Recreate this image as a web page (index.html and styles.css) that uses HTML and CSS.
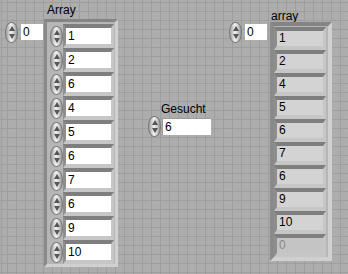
FILE: index.html
```html
<!DOCTYPE html>
<html lang="de">
<head>
  <meta charset="UTF-8" />
  <title>Array suchen</title>
  <link rel="stylesheet" href="styles.css">
</head>
<body>
  <div class="panel">
    <!-- Eingabe-Array -->
    <div class="label label-array">Array</div>
    <div class="index index-left">
      <div class="spin"></div>
      <div class="index-box">0</div>
    </div>
    <div class="array array-in">
      <div class="row"><div class="spin"></div><div class="num">1</div></div>
      <div class="row"><div class="spin"></div><div class="num">2</div></div>
      <div class="row"><div class="spin"></div><div class="num">6</div></div>
      <div class="row"><div class="spin"></div><div class="num">4</div></div>
      <div class="row"><div class="spin"></div><div class="num">5</div></div>
      <div class="row"><div class="spin"></div><div class="num">6</div></div>
      <div class="row"><div class="spin"></div><div class="num">7</div></div>
      <div class="row"><div class="spin"></div><div class="num">6</div></div>
      <div class="row"><div class="spin"></div><div class="num">9</div></div>
      <div class="row"><div class="spin"></div><div class="num">10</div></div>
    </div>

    <!-- Suchwert -->
    <div class="label label-gesucht">Gesucht</div>
    <div class="search">
      <div class="spin"></div>
      <div class="search-box">6</div>
    </div>

    <!-- Ausgabe-Array -->
    <div class="label label-out">array</div>
    <div class="index index-right">
      <div class="spin"></div>
      <div class="index-box">0</div>
    </div>
    <div class="array array-out">
      <div class="ind">1</div>
      <div class="ind">2</div>
      <div class="ind">4</div>
      <div class="ind">5</div>
      <div class="ind">6</div>
      <div class="ind">7</div>
      <div class="ind">6</div>
      <div class="ind">9</div>
      <div class="ind">10</div>
      <div class="ind disabled">0</div>
    </div>
  </div>
</body>
</html>
```

FILE: styles.css
```css
body {
  margin: 0;
  font-family: "Liberation Sans", Arial, sans-serif;
  font-size: 12px;
  color: #000;
}
.panel {
  position: relative;
  width: 348px;
  height: 274px;
  overflow: hidden;
  background-color: #adadad;
  background-image:
    repeating-linear-gradient(to right, #9e9e9e 0 1px, transparent 1px 9px),
    repeating-linear-gradient(to bottom, #9e9e9e 0 1px, transparent 1px 9px);
  background-position: 7px 2px;
}
.label {
  position: absolute;
  line-height: 14px;
}
.label-array { left: 47px; top: 3px; }
.label-gesucht { left: 161px; top: 102px; }
.label-out { left: 271px; top: 9px; }

/* Inkrement/Dekrement */
.spin {
  position: relative;
  flex: none;
  width: 13px;
  height: 21px;
  box-sizing: border-box;
  border: 1px solid #7a7a7a;
  border-radius: 6px / 10px;
  background: linear-gradient(to right, #9c9c9c, #f2f2f2 45%, #cacaca 75%, #8e8e8e);
}
.spin::before, .spin::after {
  content: "";
  position: absolute;
  left: 3px;
  border-left: 3px solid transparent;
  border-right: 3px solid transparent;
}
.spin::before {
  top: 3px;
  border-bottom: 5px solid #555;
}
.spin::after {
  bottom: 3px;
  border-top: 5px solid #555;
}

.index {
  position: absolute;
  display: flex;
  align-items: flex-start;
  gap: 3px;
}
.index-left { left: 5px; top: 22px; }
.index-right { left: 229px; top: 22px; }
.index-box {
  margin-top: 2px;
  width: 22px;
  height: 16px;
  padding-left: 2px;
  box-sizing: border-box;
  background: #fff;
  line-height: 16px;
}

.array {
  position: absolute;
  box-sizing: border-box;
  border-style: solid;
  border-color: #848484 #d0d0d0 #d0d0d0 #8a8a8a;
  background: #b6b6b6;
}
.array-in {
  left: 44px;
  top: 19px;
  width: 74px;
  border-width: 3px;
  padding: 2px 1px 0 3px;
}
.array-out {
  left: 270px;
  top: 22px;
  width: 62px;
  border-width: 4px;
  padding: 1px 2px 0 0;
}
.row {
  display: flex;
  align-items: center;
  height: 24px;
}
.num, .ind {
  box-sizing: border-box;
  border-style: solid;
  border-color: #7e7e7e #c6c6c6 #c6c6c6 #8e8e8e;
  padding-left: 2px;
}
.num {
  width: 51px;
  height: 24px;
  border-width: 4px 3px;
  background: #fff;
  line-height: 16px;
}
.ind {
  width: 52px;
  height: 23px;
  border-width: 4px 3px;
  background: #d3d3d3;
  line-height: 15px;
}
.ind.disabled {
  background: #c4c4c4;
  color: #8a8a8a;
}

.search {
  position: absolute;
  left: 148px;
  top: 116px;
  display: flex;
  align-items: flex-start;
  gap: 1px;
}
.search-box {
  margin-top: 2px;
  width: 49px;
  height: 17px;
  box-sizing: border-box;
  padding-left: 2px;
  border-left: 1px solid #9a9a9a;
  border-top: 1px solid #9a9a9a;
  background: #fff;
  line-height: 16px;
}
```
